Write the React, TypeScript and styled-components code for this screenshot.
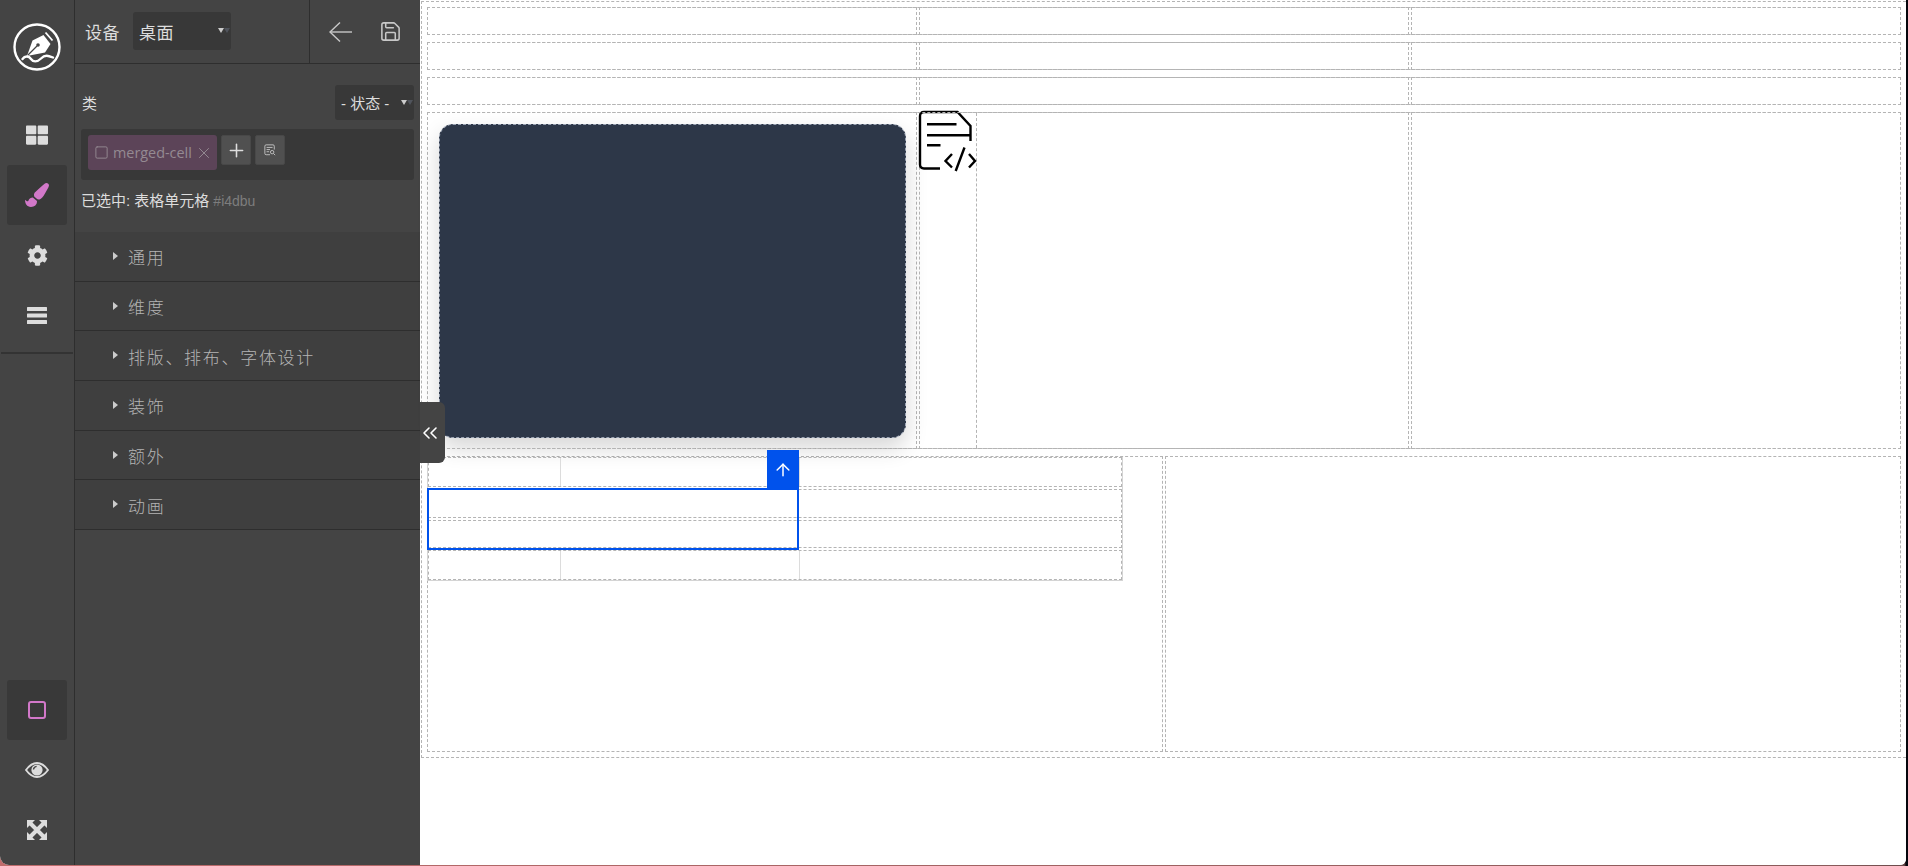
import styled, { createGlobalStyle } from "styled-components";
import { ArrowUp, ChevronsLeft, Plus, Save, Square, X } from "lucide-react";
import { FaCog, FaPaintBrush, FaThLarge } from "react-icons/fa";

const sections = ["通用", "维度", "排版、排布、字体设计", "装饰", "额外", "动画"];

const GlobalStyle = createGlobalStyle`
  html, body {
    margin: 0;
    padding: 0;
    background: #fff;
  }

  * {
    box-sizing: border-box;
  }
`;

const Frame = styled.div`
  width: 1908px;
  height: 866px;
  overflow: hidden;
  background: linear-gradient(90deg, #c06c6c 0%, #8a5a5a 96%, #6a4a4a 99.8%, #05050c 99.9%);
  font-family: "Liberation Sans", "Noto Sans CJK SC", sans-serif;
`;

const Window = styled.div`
  position: relative;
  display: flex;
  width: 1906px;
  height: 865px;
  overflow: hidden;
  background: #fff;
  border-bottom-left-radius: 9px;
  border-bottom-right-radius: 6px;
`;

const Rail = styled.nav`
  display: flex;
  flex-direction: column;
  align-items: center;
  flex: 0 0 75px;
  padding: 15px 0 5px;
  background: #444;
  border-right: 1px solid #2e2e2e;
`;

const Logo = styled.svg`
  display: block;
  flex: none;
  margin-bottom: 26px;
`;

const RailButton = styled.div<{ $active?: boolean }>`
  display: flex;
  align-items: center;
  justify-content: center;
  width: 60px;
  height: 60px;
  flex: none;
  border-radius: 3px;
  color: ${(p) => (p.$active ? "#d278c9" : "#ddd")};
  background: ${(p) => (p.$active ? "#393939" : "transparent")};
`;

const RailDivider = styled.div`
  align-self: stretch;
  height: 2px;
  margin: 7px 1px 0;
  background: #333;
`;

const RailSpacer = styled.div`
  flex: 1;
`;

const PinkSquare = styled.div`
  width: 18px;
  height: 18px;
  border: 2px solid #d278c9;
  border-radius: 3px;
`;

const Panel = styled.aside`
  display: flex;
  flex-direction: column;
  flex: 0 0 345px;
  background: #444;
  color: #ddd;
`;

const TopBar = styled.div`
  display: flex;
  height: 64px;
  flex: none;
  border-bottom: 1px solid #2e2e2e;
`;

const DeviceGroup = styled.div`
  display: flex;
  align-items: center;
  gap: 13px;
  width: 235px;
  padding: 0 0 1px 10px;
  border-right: 1px solid #2e2e2e;
  font-size: 17px;
  letter-spacing: 0.5px;
`;

const ActionGroup = styled.div`
  display: flex;
  align-items: center;
  gap: 27px;
  padding-left: 19px;
  color: #c8c8c8;
`;

const Select = styled.div<{ $width: number; $height: number }>`
  position: relative;
  display: flex;
  align-items: center;
  width: ${(p) => p.$width}px;
  height: ${(p) => p.$height}px;
  padding-left: 6px;
  background: #383838;
  border-radius: 3px;
  color: #ddd;
`;

const Caret = styled.span`
  position: absolute;
  top: 50%;
  right: 1px;
  display: flex;
  margin-top: -3px;

  &::before,
  &::after {
    content: "";
    width: 0;
    height: 0;
    border-left: 3.5px solid transparent;
    border-right: 3.5px solid transparent;
  }

  &::before {
    border-top: 5px solid #ccc;
  }

  &::after {
    border-top: 5px solid #50545c;
  }
`;

const ClassSection = styled.section`
  display: flex;
  flex-direction: column;
  height: 168px;
  flex: none;
  padding: 21px 6px 0;
`;

const ClassHeader = styled.div`
  display: flex;
  align-items: center;
  justify-content: space-between;
  padding-left: 1px;
  font-size: 15px;
`;

const StateLabel = styled.span`
  font-size: 15px;
`;

const TagBox = styled.div`
  display: flex;
  align-items: flex-start;
  gap: 4px;
  height: 51px;
  margin-top: 9px;
  padding: 6px 7px;
  background: #383838;
  border-radius: 3px;
`;

const Tag = styled.div`
  display: flex;
  align-items: center;
  width: 129px;
  height: 35px;
  padding-left: 6px;
  background: #5c4458;
  border-radius: 3px;
  color: #948a92;
  font-family: "Open Sans", "Liberation Sans", sans-serif;
  font-size: 14.4px;

  svg {
    flex: none;
  }
`;

const TagName = styled.span`
  margin: 0 3px 0 4px;
`;

const TagButton = styled.div`
  display: flex;
  align-items: center;
  justify-content: center;
  width: 30px;
  height: 30px;
  background: #505050;
  border: 1px solid #484848;
  border-radius: 2px;
  color: #ddd;
`;

const SelectedLine = styled.div`
  margin-top: 11px;
  font-size: 15px;
  line-height: 20px;
`;

const SelectedId = styled.span`
  margin-left: 4px;
  color: #7d7d7d;
  font-size: 14px;
`;

const Accordion = styled.div`
  display: flex;
  flex-direction: column;
`;

const AccordionRow = styled.div`
  display: flex;
  align-items: center;
  gap: 10px;
  height: 49.7px;
  padding: 1px 0 0 38px;
  background: #3f3f3f;
  border-bottom: 1px solid #2e2e2e;
  color: #b4b4b4;
  font-size: 17px;
  font-weight: 300;
  letter-spacing: 1.7px;
`;

const Triangle = styled.span`
  width: 0;
  height: 0;
  margin-bottom: 2px;
  border-top: 4px solid transparent;
  border-bottom: 4px solid transparent;
  border-left: 5px solid #ccc;
`;

const Main = styled.main`
  flex: 1;
  padding: 1px 0 0 1px;
  background: #fff;
`;

const Collapse = styled.div`
  position: absolute;
  top: 402px;
  left: 420px;
  display: flex;
  align-items: center;
  width: 25px;
  height: 61px;
  background: #444;
  border-bottom-right-radius: 6px;
  border-top-right-radius: 6px;
  color: #fff;

  svg {
    flex: none;
    margin-left: -2px;
  }
`;

const Wrapper = styled.div`
  display: flex;
  flex-direction: column;
  gap: 7px;
  height: 757px;
  padding: 5px 0 0 5px;
  border: 1px dashed #b4b4b4;
  border-right: none;
`;

const Row = styled.div<{ $height: number }>`
  position: relative;
  display: grid;
  grid-template-columns: 490px 490px 490px;
  column-gap: 2px;
  width: 1474px;
  height: ${(p) => p.$height}px;

  &::before {
    content: "";
    position: absolute;
    inset: 0;
    border-top: 1px dashed #b4b4b4;
    border-bottom: 1px dashed #b4b4b4;
    pointer-events: none;
  }
`;

const Cell = styled.div`
  border: 1px dashed #b4b4b4;
`;

const CardCell = styled(Cell)`
  padding: 11px 10px 0 11px;
`;

const Card = styled.div`
  height: 314px;
  background: #2d3748;
  border: 1px dashed #9aa3b3;
  border-radius: 14px;
  box-shadow: 0 10px 22px rgba(0, 0, 0, 0.16);
`;

const SplitCell = styled(Cell)`
  display: grid;
  grid-template-columns: 57px 1fr;
`;

const IconColumn = styled.div`
  border-right: 1px dashed #b4b4b4;
`;

const DocIcon = styled.svg`
  display: block;
  margin-top: -1px;
  overflow: visible;
`;

const LowerRow = styled.div`
  display: grid;
  grid-template-columns: 736px 736px;
  column-gap: 2px;
  width: 1474px;
  height: 296px;
`;

const NestedCell = styled(Cell)`
  padding-right: 39px;
`;

const NestedTable = styled.div`
  position: relative;
  display: flex;
  flex-direction: column;
  gap: 2px;
  height: 124px;
  margin-left: -1px;
  border: 1px solid #d4d4d4;
  border-top: none;
`;

const NestedRow = styled.div<{ $tall?: boolean }>`
  display: grid;
  grid-template-columns: 132px 239px 1fr;
  height: ${(p) => (p.$tall ? 30 : 29)}px;
  border: 1px dashed #b4b4b4;
`;

const NestedCol = styled.div<{ $ruled?: boolean }>`
  border-right: ${(p) => (p.$ruled ? "1px solid #dcdcdc" : "none")};
`;

const Selection = styled.div`
  position: absolute;
  top: 31px;
  left: -1px;
  width: 372px;
  height: 62px;
  border: 2px solid #0052ec;
`;

const SelectionBadge = styled.div`
  position: absolute;
  top: -40px;
  right: -2px;
  display: flex;
  align-items: center;
  justify-content: center;
  width: 32px;
  height: 40px;
  background: #0052ec;
  color: #fff;
`;

function LogoMark() {
  return (
    <Logo width="64" height="64" viewBox="0 0 64 64" fill="none">
      <circle cx="32" cy="32" r="22.5" stroke="#fff" strokeWidth="2.4" />
      <path d="M22 41 L27.5 25.5 L38.5 20 L45.5 29 L40 37.5 Z" fill="#fff" />
      <path d="M23 40 L32 31" stroke="#444" strokeWidth="1.2" />
      <circle cx="33" cy="30" r="1.8" fill="#444" />
      <path d="M40.5 17.5 L47.5 25.5" stroke="#fff" strokeWidth="1.8" />
      <path
        d="M17.5 44 C20 40.5 24 41 26 44 S32 47.5 36 43.5 S43 40.5 48 42.5"
        stroke="#fff"
        strokeWidth="2.4"
        strokeLinecap="round"
      />
    </Logo>
  );
}

function Bars() {
  return (
    <svg width="20" height="17" viewBox="0 0 20 17" fill="#ddd">
      <rect width="20" height="4" rx="0.5" />
      <rect y="6.5" width="20" height="4" rx="0.5" />
      <rect y="13" width="20" height="4" rx="0.5" />
    </svg>
  );
}

function Expand() {
  return (
    <svg width="20" height="20" viewBox="0 0 20 20" fill="#ddd">
      <path d="M0 0 H8 L0 8 Z M20 0 V8 L12 0 Z M0 20 V12 L8 20 Z M20 20 H12 L20 12 Z" />
      <path d="M3 3 L17 17 M17 3 L3 17" stroke="#ddd" strokeWidth="4" />
    </svg>
  );
}

function Eye() {
  return (
    <svg width="24" height="16" viewBox="0 0 24 16" fill="none">
      <path d="M1 8 C5 2.5 8.5 1 12 1 S19 2.5 23 8 C19 13.5 15.5 15 12 15 S5 13.5 1 8 Z" stroke="#ddd" strokeWidth="1.8" />
      <circle cx="12" cy="8" r="5.6" fill="#ddd" />
      <path d="M8.5 7.5 C8.7 5.8 10 4.6 11.6 4.4" stroke="#444" strokeWidth="1.4" />
    </svg>
  );
}

function BackArrow() {
  return (
    <svg width="23" height="20" viewBox="0 0 23 20" fill="none" stroke="#c8c8c8" strokeWidth="1.4">
      <path d="M1 10 H23" />
      <path d="M11 0.5 L1 10 L11 19.5" />
    </svg>
  );
}

function ClassSearch() {
  return (
    <svg width="12" height="12" viewBox="0 0 14 14" fill="none" stroke="#ccc" strokeWidth="1">
      <path d="M7 12.5 H2.5 Q1 12.5 1 11 V2.5 Q1 1 2.5 1 H10.5 Q12 1 12 2.5 V6.5" />
      <path d="M3 4 H10 M3 6.5 H7 M3 9 H6" />
      <circle cx="9.5" cy="9.5" r="2" />
      <path d="M11 11 L13 13" />
    </svg>
  );
}

function CodeDoc() {
  return (
    <DocIcon width="57" height="58" viewBox="6 6 57 58" fill="none" stroke="#000" strokeWidth="2.4">
      <path d="M26 62.5 H10 Q6 62.5 6 58.5 V10 Q6 6 10 6 H43.5 L56.5 20 V35" />
      <path d="M13 18.3 H42.5 M13 29.3 H56 M13 39.3 H26.5" />
      <path d="M38 48 L31.5 55 L38 61.5 M55 48 L61 55 L55 61.5 M50.5 41.5 L41.7 65" />
    </DocIcon>
  );
}

function PlainRow() {
  return (
    <Row $height={28}>
      <Cell />
      <Cell />
      <Cell />
    </Row>
  );
}

function RuledRow() {
  return (
    <NestedRow $tall>
      <NestedCol $ruled />
      <NestedCol $ruled />
      <NestedCol />
    </NestedRow>
  );
}

export default function App() {
  return (
    <>
      <GlobalStyle />
      <Frame>
        <Window>
          <Rail>
            <LogoMark />
            <RailButton>
              <FaThLarge size={22} />
            </RailButton>
            <RailButton $active>
              <FaPaintBrush size={24} />
            </RailButton>
            <RailButton>
              <FaCog size={21} />
            </RailButton>
            <RailButton>
              <Bars />
            </RailButton>
            <RailDivider />
            <RailSpacer />
            <RailButton $active>
              <PinkSquare />
            </RailButton>
            <RailButton>
              <Eye />
            </RailButton>
            <RailButton>
              <Expand />
            </RailButton>
          </Rail>

          <Panel>
            <TopBar>
              <DeviceGroup>
                设备
                <Select $width={98} $height={38}>
                  桌面
                  <Caret />
                </Select>
              </DeviceGroup>
              <ActionGroup>
                <BackArrow />
                <Save size={23} strokeWidth={1.6} />
              </ActionGroup>
            </TopBar>

            <ClassSection>
              <ClassHeader>
                类
                <Select $width={79} $height={35}>
                  <StateLabel>- 状态 -</StateLabel>
                  <Caret />
                </Select>
              </ClassHeader>
              <TagBox>
                <Tag>
                  <Square size={15} strokeWidth={1.5} />
                  <TagName>merged-cell</TagName>
                  <X size={18} strokeWidth={1.3} />
                </Tag>
                <TagButton>
                  <Plus size={21} strokeWidth={1.8} />
                </TagButton>
                <TagButton>
                  <ClassSearch />
                </TagButton>
              </TagBox>
              <SelectedLine>
                已选中: 表格单元格
                <SelectedId>#i4dbu</SelectedId>
              </SelectedLine>
            </ClassSection>

            <Accordion>
              {sections.map((name) => (
                <AccordionRow key={name}>
                  <Triangle />
                  {name}
                </AccordionRow>
              ))}
            </Accordion>
          </Panel>

          <Main>
            <Wrapper>
              <PlainRow />
              <PlainRow />
              <PlainRow />
              <Row $height={337}>
                <CardCell>
                  <Card />
                </CardCell>
                <SplitCell>
                  <IconColumn>
                    <CodeDoc />
                  </IconColumn>
                  <div />
                </SplitCell>
                <Cell />
              </Row>
              <LowerRow>
                <NestedCell>
                  <NestedTable>
                    <RuledRow />
                    <NestedRow />
                    <NestedRow />
                    <RuledRow />
                    <Selection>
                      <SelectionBadge>
                        <ArrowUp size={20} strokeWidth={1.8} />
                      </SelectionBadge>
                    </Selection>
                  </NestedTable>
                </NestedCell>
                <Cell />
              </LowerRow>
            </Wrapper>
          </Main>

          <Collapse>
            <ChevronsLeft size={24} strokeWidth={1.6} />
          </Collapse>
        </Window>
      </Frame>
    </>
  );
}
